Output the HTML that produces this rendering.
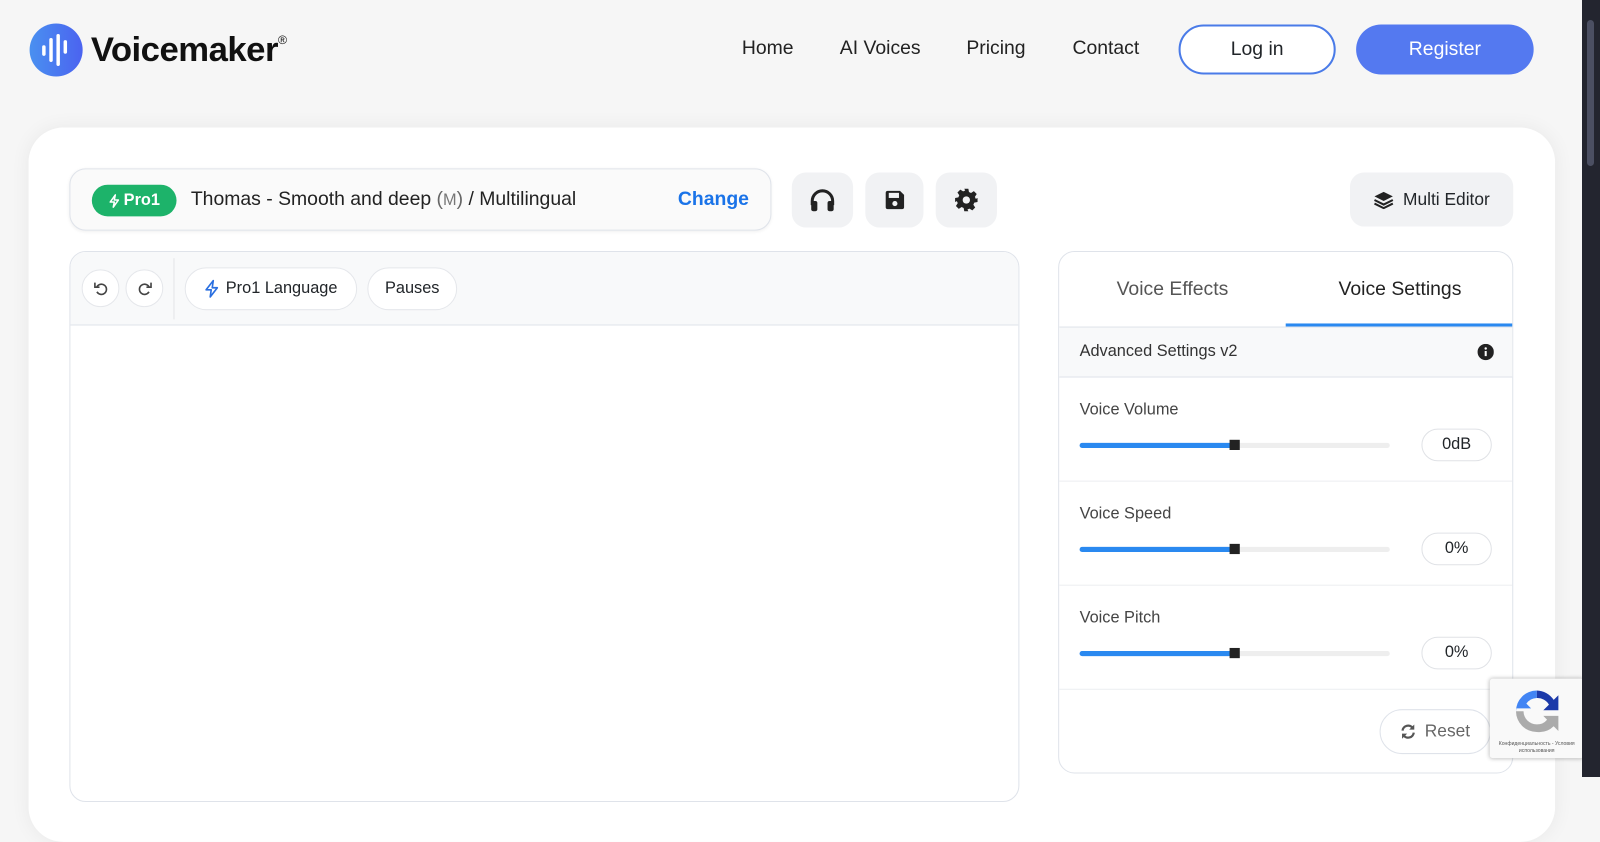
<!DOCTYPE html>
<html><head><meta charset="utf-8"><style>
*{box-sizing:border-box;margin:0;padding:0}
body{width:1600px;height:777px;overflow:hidden;background:#f6f6f6;font-family:"Liberation Sans",Arial,sans-serif;color:#212529;position:relative}
#w{position:absolute;left:0;top:0;width:1568px;height:762px;transform:scale(1.0204);transform-origin:0 0}
.sb{position:absolute;left:1582px;top:0;width:18px;height:777px;background:#23252f}
.sb .th{position:absolute;left:5px;top:20px;width:7px;height:146px;background:#4b4f62;border-radius:4px}
.logo{position:absolute;left:29px;top:23px;display:flex;align-items:center}
.logo .c{width:52px;height:52px;border-radius:50%;background:linear-gradient(90deg,#4a90f0,#4b63f0);display:flex;align-items:center;justify-content:center}
.logo .t{font-size:34px;font-weight:bold;letter-spacing:-0.5px;margin-left:8px;color:#111}
.logo sup{font-size:12px;font-weight:normal;position:relative;top:-4px}
.nav{position:absolute;top:37px;font-size:19px;color:#222}
.btn-login{position:absolute;left:1155px;top:24px;width:154px;height:49px;border:2px solid #4a7be8;border-radius:25px;font-size:19px;display:flex;align-items:center;justify-content:center;background:#fff}
.btn-reg{position:absolute;left:1329px;top:24px;width:174px;height:49px;background:#5479f0;color:#fff;border-radius:25px;font-size:19px;display:flex;align-items:center;justify-content:center}
.card{position:absolute;left:28px;top:125px;width:1496px;height:700px;background:#fff;border-radius:34px;box-shadow:0 0 20px rgba(0,0,0,.06)}
.voice{position:absolute;left:68px;top:165px;width:688px;height:61px;border:1px solid #dfe3ea;border-radius:16px;background:#fafafa;box-shadow:0 1px 3px rgba(0,0,0,.06)}
.pro{position:absolute;left:21px;top:15px;width:83px;height:31px;background:#1db36a;color:#fff;border-radius:16px;font-size:16px;font-weight:bold;display:flex;align-items:center;justify-content:center;gap:3px}
.vname{position:absolute;left:118px;top:19px;font-size:19px;color:#222}
.change{position:absolute;right:21px;top:19px;font-size:19px;color:#1a73e8;font-weight:bold}
.ib{position:absolute;top:169px;height:54px;background:#f1f2f4;border-radius:14px;display:flex;align-items:center;justify-content:center}
.multi{position:absolute;left:1323px;top:169px;width:160px;height:53px;background:#f1f2f4;border-radius:14px;font-size:17px;display:flex;align-items:center;justify-content:center;gap:9px}
.ed{position:absolute;left:68px;top:246px;width:931px;height:540px;border:1px solid #dfe3ea;border-radius:16px;background:#fff;overflow:hidden}
.edbar{height:72px;background:#f8f9fa;border-bottom:1px solid #dfe3ea;position:relative}
.cb{position:absolute;top:17px;width:37px;height:37px;border-radius:50%;background:#fff;border:1px solid #e5e7eb;display:flex;align-items:center;justify-content:center}
.pb{position:absolute;top:15px;height:42px;border-radius:21px;background:#fff;border:1px solid #e5e7eb;display:flex;align-items:center;justify-content:center;font-size:16px;gap:7px}
.panel{position:absolute;left:1037px;top:246px;width:446px;height:512px;border:1px solid #dfe3ea;border-radius:16px;background:#fff;overflow:hidden}
.tab{position:absolute;top:0;height:73px;width:222px;display:flex;align-items:center;justify-content:center;font-size:19px}
.adv{position:absolute;top:73px;left:0;width:446px;height:50px;background:#f8f9fa;border-top:1px solid #dfe3ea;border-bottom:1px solid #dfe3ea;font-size:16px;padding:15px 0 0 20px;color:#333}
.row{position:absolute;left:0;width:446px;height:102px;border-bottom:1px solid #eceef1}
.row .l{position:absolute;left:20px;top:23px;font-size:16px;color:#444}
.trk{position:absolute;left:20px;top:64px;width:304px;height:5px;border-radius:3px;background:#eee}
.trk .f{width:152px;height:5px;border-radius:3px;background:#2a89f0}
.trk .k{position:absolute;left:147px;top:-3px;width:10px;height:10px;background:#222}
.val{position:absolute;left:355px;top:50px;width:69px;height:32px;border:1px solid #e0e2e6;border-radius:16px;font-size:16px;display:flex;align-items:center;justify-content:center}
.reset{position:absolute;left:314px;top:448px;width:109px;height:44px;border:1px solid #dfe3ea;border-radius:22px;display:flex;align-items:center;justify-content:center;gap:8px;font-size:17px;color:#666}
.rc{position:absolute;left:1460px;top:665px;width:92px;height:78px;background:#f9f9f9;box-shadow:0 0 4px rgba(0,0,0,.3);border-radius:3px}
.rc .tx{position:absolute;left:2px;top:61px;width:88px;font-size:5px;color:#555;text-align:center;line-height:7px}
</style></head><body>
<div id="w">
<div class="logo"><div class="c"><svg width="30" height="32" viewBox="0 0 30 32"><g stroke="#fff" stroke-width="3.4" stroke-linecap="round"><line x1="3" y1="13" x2="3" y2="20"/><line x1="10" y1="6" x2="10" y2="26"/><line x1="17" y1="2" x2="17" y2="30"/><line x1="24" y1="8" x2="24" y2="18"/></g></svg></div><div class="t">Voicemaker<sup>®</sup></div></div>
<div class="nav" style="left:727px">Home</div>
<div class="nav" style="left:823px">AI Voices</div>
<div class="nav" style="left:947px">Pricing</div>
<div class="nav" style="left:1051px">Contact</div>
<div class="btn-login">Log in</div>
<div class="btn-reg">Register</div>
<div class="card"></div>
<div class="voice">
 <div class="pro"><svg width="12" height="14" viewBox="0 0 12 14"><path d="M7 1L2 8h4l-1 5 5-7H6z" fill="none" stroke="#fff" stroke-width="1.5" stroke-linejoin="round"/></svg>Pro1</div>
 <div class="vname">Thomas - Smooth and deep <span style="color:#666">(</span><span style="color:#777;font-size:16px">M</span><span style="color:#666">)</span> / Multilingual</div>
 <div class="change">Change</div>
</div>
<div class="ib" style="left:776px;width:60px"><svg width="26" height="24" viewBox="0 0 26 24"><path d="M3 17v-4a10 10 0 0 1 20 0v4" fill="none" stroke="#222" stroke-width="3"/><rect x="2" y="13" width="6" height="10" rx="2" fill="#222"/><rect x="18" y="13" width="6" height="10" rx="2" fill="#222"/></svg></div>
<div class="ib" style="left:848px;width:57px"><svg width="22" height="22" viewBox="0 0 22 22"><path d="M2 4a2 2 0 0 1 2-2h12l4 4v12a2 2 0 0 1-2 2H4a2 2 0 0 1-2-2z" fill="#222"/><rect x="5" y="4" width="10" height="5" fill="#f1f2f4"/><circle cx="11" cy="14.5" r="2.5" fill="#f1f2f4"/></svg></div>
<div class="ib" style="left:917px;width:60px"><svg width="24" height="24" viewBox="0 0 24 24"><path fill="#222" d="M10 1h4l.6 3.2 2 .9 2.8-1.8 2.8 2.8-1.8 2.8.9 2L23 10v4l-3.2.6-.9 2 1.8 2.8-2.8 2.8-2.8-1.8-2 .9L14 23h-4l-.6-3.2-2-.9-2.8 1.8-2.8-2.8 1.8-2.8-.9-2L1 14v-4l3.2-.6.9-2-1.8-2.8 2.8-2.8 2.8 1.8 2-.9z"/><circle cx="12" cy="12" r="3.6" fill="#f1f2f4"/></svg></div>
<div class="multi"><svg width="20" height="18" viewBox="0 0 20 18"><path d="M10 1l9 4.5-9 4.5-9-4.5z" fill="#222"/><path d="M1 9l9 4.5L19 9M1 12.5L10 17l9-4.5" fill="none" stroke="#222" stroke-width="2"/></svg>Multi Editor</div>
<div class="ed"><div class="edbar">
 <div class="cb" style="left:11px"><svg width="16" height="16" viewBox="0 0 16 16"><path d="M4 6a5 5 0 1 1 0 5" fill="none" stroke="#444" stroke-width="1.6"/><path d="M2 2v4.5h4.5" fill="none" stroke="#444" stroke-width="1.6"/></svg></div>
 <div class="cb" style="left:54px"><svg width="16" height="16" viewBox="0 0 16 16"><path d="M12 6a5 5 0 1 0 0 5" fill="none" stroke="#444" stroke-width="1.6"/><path d="M14 2v4.5H9.5" fill="none" stroke="#444" stroke-width="1.6"/></svg></div>
 <div style="position:absolute;left:101px;top:6px;width:1px;height:60px;background:#e3e5e8"></div>
 <div class="pb" style="left:112px;width:169px"><svg width="14" height="18" viewBox="0 0 14 18"><path d="M9 1L2 10h5l-1 7 7-9H8z" fill="none" stroke="#2a6fe0" stroke-width="1.6" stroke-linejoin="round"/></svg>Pro1 Language</div>
 <div class="pb" style="left:291px;width:88px">Pauses</div>
</div></div>
<div class="panel">
 <div class="tab" style="left:0;color:#555">Voice Effects</div>
 <div class="tab" style="left:222px;width:224px;color:#222">Voice Settings</div>
 <div style="position:absolute;left:222px;top:70px;width:224px;height:3px;background:#2a89f0"></div>
 <div class="adv">Advanced Settings v2<svg style="position:absolute;right:20px;top:16px" width="16" height="16" viewBox="0 0 16 16"><circle cx="8" cy="8" r="8" fill="#222"/><rect x="7" y="7" width="2" height="5" fill="#fff"/><circle cx="8" cy="4.5" r="1.2" fill="#fff"/></svg></div>
 <div class="row" style="top:123px"><div class="l">Voice Volume</div><div class="trk"><div class="f"></div><div class="k"></div></div><div class="val">0dB</div></div>
 <div class="row" style="top:225px"><div class="l">Voice Speed</div><div class="trk"><div class="f"></div><div class="k"></div></div><div class="val">0%</div></div>
 <div class="row" style="top:327px"><div class="l">Voice Pitch</div><div class="trk"><div class="f"></div><div class="k"></div></div><div class="val">0%</div></div>
 <div class="reset"><svg width="16" height="16" viewBox="0 0 16 16"><path d="M2.5 7a5.5 5.5 0 0 1 10-2.5M13.5 9a5.5 5.5 0 0 1-10 2.5" fill="none" stroke="#555" stroke-width="2.2"/><path d="M14 1v5h-5zM2 15v-5h5z" fill="#555"/></svg>Reset</div>
</div>
<div class="rc"><svg style="position:absolute;left:22px;top:8px" width="48" height="48" viewBox="0 0 52 52"><path d="M26 4a22 22 0 0 1 18 10l5-5v16H33l6-6a14 14 0 0 0-13-7z" fill="#1c3aa9"/><path d="M4 26A22 22 0 0 1 26 4v8a14 14 0 0 0-11 6l5 5H4z" fill="#4285f4"/><path d="M26 48A22 22 0 0 1 4 26h8a14 14 0 0 0 14 14 14 14 0 0 0 11-5l-4-4h16v16l-5-5a22 22 0 0 1-18 6z" fill="#ababab"/></svg><div class="tx">Конфиденциальность - Условия использования</div></div>
</div>
<div class="sb"><div class="th"></div></div>
</body></html>
